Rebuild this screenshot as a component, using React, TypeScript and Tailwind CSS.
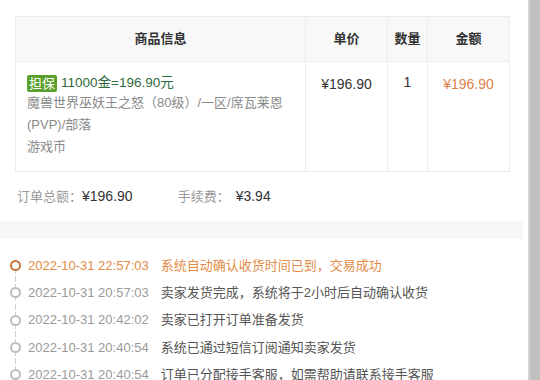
import React from "react";

const font = { fontFamily: '"Liberation Sans", "Noto Sans CJK SC", sans-serif' };

const events = [
  { t: "2022-10-31 22:57:03", m: "系统自动确认收货时间已到，交易成功", active: true },
  { t: "2022-10-31 20:57:03", m: "卖家发货完成，系统将于2小时后自动确认收货" },
  { t: "2022-10-31 20:42:02", m: "卖家已打开订单准备发货" },
  { t: "2022-10-31 20:40:54", m: "系统已通过短信订阅通知卖家发货" },
  { t: "2022-10-31 20:40:54", m: "订单已分配接手客服，如需帮助请联系接手客服" },
];

export default function App() {
  return (
    <div className="flex w-[540px] h-[380px] overflow-hidden bg-white text-[13px]" style={font}>
      <div className="flex-1 flex flex-col min-w-0">
        <div className="shrink-0 pl-[15px] pt-[16px]">
          <table className="table-fixed w-[494px] border-collapse">
            <colgroup>
              <col className="w-[290px]" />
              <col className="w-[82px]" />
              <col className="w-[40px]" />
              <col className="w-[82px]" />
            </colgroup>
            <thead>
              <tr className="h-[45px] bg-[#f8f8f8] text-[#333]">
                <th className="border border-[#ececec] font-semibold text-center">商品信息</th>
                <th className="border border-[#ececec] font-semibold text-center">单价</th>
                <th className="border border-[#ececec] font-semibold text-center">数量</th>
                <th className="border border-[#ececec] font-semibold text-center">金额</th>
              </tr>
            </thead>
            <tbody>
              <tr className="h-[110px] align-top">
                <td className="border border-[#ececec] pl-[11px] pr-2 pt-[11px]">
                  <div className="flex items-center h-[20px]">
                    <span className="bg-[#5aa02c] text-white px-[2px] leading-[17px] rounded-[2px] mr-[4px] text-[13px]">担保</span>
                    <span className="text-[#2f6a3c] text-[13.5px]">11000金=196.90元</span>
                  </div>
                  <div className="text-[#8a8a8a] leading-[22px] mt-[-1px]">
                    <div>魔兽世界巫妖王之怒（80级）/一区/席瓦莱恩</div>
                    <div>(PVP)/部落</div>
                    <div>游戏币</div>
                  </div>
                </td>
                <td className="border border-[#ececec] text-center pt-[12px] text-[14px] text-[#333]">¥196.90</td>
                <td className="border border-[#ececec] text-center pt-[10px] text-[14px] text-[#333]">1</td>
                <td className="border border-[#ececec] text-center pt-[12px] text-[14px] text-[#e0804a]">¥196.90</td>
              </tr>
            </tbody>
          </table>
        </div>
        <div className="shrink-0 h-[49px] flex items-center pl-[17px]">
          <span className="text-[#999]">订单总额：</span>
          <span className="text-[#333] text-[14px]">¥196.90</span>
          <span className="text-[#999] ml-[45px]">手续费：</span>
          <span className="text-[#333] text-[14px] ml-[6px]">¥3.94</span>
        </div>
        <div className="shrink-0 h-[18px] bg-[#f7f7f7] mr-[5px]" />
        <div className="shrink-0 pt-[13px] flex flex-col">
          {events.map((e, i) => (
            <div key={i} className="shrink-0 flex items-center h-[27.25px]">
              <div className="w-[28px] self-stretch pl-[10px] flex">
                <div className="w-[11px] flex flex-col items-center">
                  <div className={`flex-1 border-l border-dashed ${i === 0 ? "border-transparent" : "border-[#d0d0d0]"}`} />
                  <div className={`shrink-0 w-[11px] h-[11px] rounded-full border-2 ${e.active ? "border-[#c8763f]" : "border-[#bdbdbd]"}`} />
                  <div className="flex-1 border-l border-dashed border-[#d0d0d0]" />
                </div>
              </div>
              <span className={e.active ? "text-[#e38b45]" : "text-[#9a9a9a]"}>{e.t}</span>
              <span className={`ml-3 ${e.active ? "text-[#e38b45]" : "text-[#555]"}`}>{e.m}</span>
            </div>
          ))}
        </div>
      </div>
      <div className="w-[12px] shrink-0 bg-[#c1c1c1] border-l-2 border-[#d4d4d4]" />
    </div>
  );
}
